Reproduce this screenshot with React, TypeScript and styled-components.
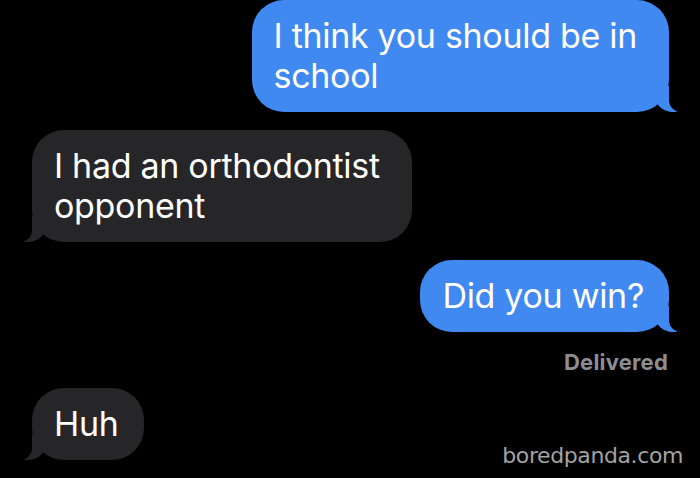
import styled, { createGlobalStyle } from "styled-components";

const GlobalStyle = createGlobalStyle`
    html, body {
        margin: 0;
        padding: 0;
        background: #000;
    }
    #root {
        height: 478px;
    }
`;

const Screen = styled.div`
    position: relative;
    width: 700px;
    height: 478px;
    overflow: hidden;
    background-color: #000;
    font-family: Inter, "Liberation Sans", sans-serif;
`;

const Thread = styled.div`
    display: flex;
    flex-direction: column;
    padding: 0 31px 0 32px;
    gap: 18px;
`;

// wrapped bubbles keep a bit of slack on the right, like iMessage does
const Bubble = styled.div<{ $mine?: boolean; $wrapped?: boolean }>`
    position: relative;
    align-self: ${(p) => (p.$mine ? "flex-end" : "flex-start")};
    padding: 16px ${(p) => (p.$wrapped ? 32 : 25)}px 16px 22px;
    border-radius: 32px;
    background-color: ${(p) => (p.$mine ? "#3f89f1" : "#262628")};
    color: #fff;
    font-size: 34px;
    line-height: 40px;
    letter-spacing: -0.3px;

    &::before,
    &::after {
        content: "";
        position: absolute;
        bottom: 0;
        height: 26px;
    }

    &::before {
        width: 22px;
        background-color: ${(p) => (p.$mine ? "#3f89f1" : "#262628")};
        ${(p) =>
            p.$mine
                ? "right: -8px; border-bottom-left-radius: 18px 16px;"
                : "left: -8px; border-bottom-right-radius: 18px 16px;"}
    }

    &::after {
        width: 26px;
        background-color: #000;
        ${(p) =>
            p.$mine
                ? "right: -26px; border-bottom-left-radius: 12px;"
                : "left: -26px; border-bottom-right-radius: 12px;"}
    }
`;

const Line = styled.span`
    display: block;
    white-space: nowrap;
`;

const Status = styled.div`
    align-self: flex-end;
    margin: -1px 1px -5px 0;
    color: #8d8d92;
    font-size: 22px;
    font-weight: 700;
    line-height: 26px;
    letter-spacing: 0.2px;
`;

const Watermark = styled.div`
    position: absolute;
    right: 17px;
    bottom: 10px;
    color: #a3a3a3;
    font-family: "DejaVu Sans", Verdana, sans-serif;
    font-size: 22px;
    letter-spacing: -0.4px;
`;

const messages: { mine?: boolean; lines: string[] }[] = [
    { mine: true, lines: ["I think you should be in", "school"] },
    { lines: ["I had an orthodontist", "opponent"] },
    { mine: true, lines: ["Did you win?"] },
];

export default function App() {
    return (
        <Screen>
            <GlobalStyle />
            <Thread>
                {messages.map((m, i) => (
                    <Bubble key={i} $mine={m.mine} $wrapped={m.lines.length > 1}>
                        {m.lines.map((l) => (
                            <Line key={l}>{l}</Line>
                        ))}
                    </Bubble>
                ))}
                <Status>Delivered</Status>
                <Bubble>
                    <Line>Huh</Line>
                </Bubble>
            </Thread>
            <Watermark>boredpanda.com</Watermark>
        </Screen>
    );
}
